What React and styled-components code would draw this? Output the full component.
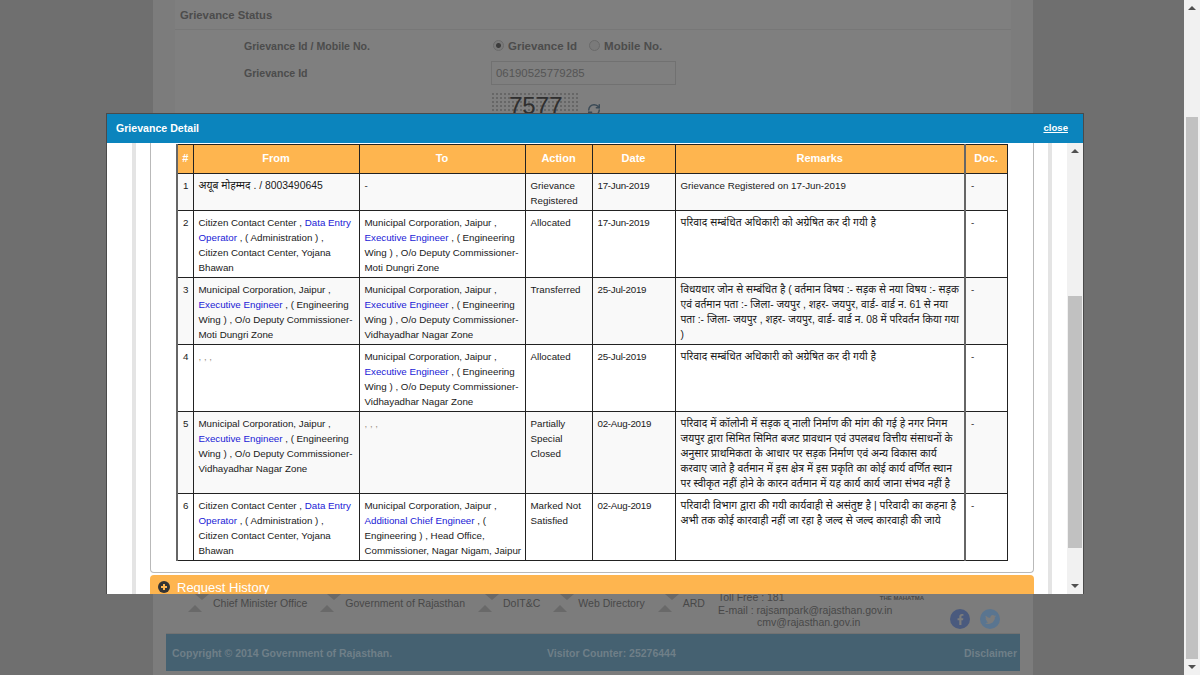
import React from "react";
import styled, { createGlobalStyle } from "styled-components";
import { RefreshCw } from "lucide-react";
import { FaFacebookF, FaTwitter } from "react-icons/fa";

const muni = "Municipal Corporation, Jaipur ,";

const Link = styled.a`
  color: #1a1ad6;
`;

const Muted = styled.span`
  color: #9a8f80;
`;

const Hindi = styled.span`
  font-size: ${(p) => (p.$small ? "10.3px" : "10.4px")};
`;

const Who = ({ org, role, rest }) => (
  <>
    {org} <Link>{role}</Link> {rest}
  </>
);

const citizenRest = (
  <>
    , ( Administration ) ,
    <br />
    Citizen Contact Center, Yojana Bhawan
  </>
);

const rows = [
  {
    id: 1,
    from: <Hindi>अयूब मोहम्मद . / 8003490645</Hindi>,
    to: "-",
    action: "Grievance Registered",
    date: "17-Jun-2019",
    remarks: "Grievance Registered on 17-Jun-2019",
  },
  {
    id: 2,
    from: <Who org="Citizen Contact Center ," role="Data Entry Operator" rest={citizenRest} />,
    to: <Who org={muni} role="Executive Engineer" rest=", ( Engineering Wing ) , O/o Deputy Commissioner-Moti Dungri Zone" />,
    action: "Allocated",
    date: "17-Jun-2019",
    remarks: <Hindi>परिवाद सम्बंधित अधिकारी को अग्रेषित कर दी गयी है</Hindi>,
  },
  {
    id: 3,
    from: <Who org={muni} role="Executive Engineer" rest=", ( Engineering Wing ) , O/o Deputy Commissioner-Moti Dungri Zone" />,
    to: <Who org={muni} role="Executive Engineer" rest=", ( Engineering Wing ) , O/o Deputy Commissioner-Vidhayadhar Nagar Zone" />,
    action: "Transferred",
    date: "25-Jul-2019",
    remarks: (
      <Hindi $small>
        विधयधार जोन से सम्बंधित है ( वर्तमान विषय :- सड़क से नया विषय :- सड़क एवं वर्तमान पता :- जिला- जयपुर , शहर- जयपुर, वार्ड- वार्ड न. 61 से नया पता :- जिला- जयपुर , शहर- जयपुर, वार्ड- वार्ड न. 08 में परिवर्तन किया गया
        <br />)
      </Hindi>
    ),
  },
  {
    id: 4,
    from: <Muted>, , ,</Muted>,
    to: <Who org={muni} role="Executive Engineer" rest=", ( Engineering Wing ) , O/o Deputy Commissioner-Vidhayadhar Nagar Zone" />,
    action: "Allocated",
    date: "25-Jul-2019",
    remarks: <Hindi>परिवाद सम्बंधित अधिकारी को अग्रेषित कर दी गयी है</Hindi>,
  },
  {
    id: 5,
    from: <Who org={muni} role="Executive Engineer" rest=", ( Engineering Wing ) , O/o Deputy Commissioner-Vidhayadhar Nagar Zone" />,
    to: <Muted>, , ,</Muted>,
    action: "Partially Special Closed",
    date: "02-Aug-2019",
    remarks: (
      <Hindi>
        परिवाद में कॉलोनी में सड़क व् नाली निर्माण की मांग की गई हे नगर निगम जयपुर द्वारा सिमित सिमित बजट प्रावधान एवं उपलबध वित्तीय संसाधनों के अनुसार प्राथमिकता के आधार पर सड़क निर्माण एवं अन्य विकास कार्य करवाए जाते है वर्तमान में इस क्षेत्र में इस प्रकृति का कोई कार्य वर्णित स्थान पर स्वीकृत नहीं होने के कारन वर्तमान में यह कार्य कार्य जाना संभव नहीं है
      </Hindi>
    ),
  },
  {
    id: 6,
    from: <Who org="Citizen Contact Center ," role="Data Entry Operator" rest={citizenRest} />,
    to: <Who org={muni} role="Additional Chief Engineer" rest=", ( Engineering ) , Head Office, Commissioner, Nagar Nigam, Jaipur" />,
    action: "Marked Not Satisfied",
    date: "02-Aug-2019",
    remarks: <Hindi>परिवादी विभाग द्वारा की गयी कार्यवाही से असंतुष्ट है | परिवादी का कहना है अभी तक कोई कारवाही नहीं जा रहा है जल्द से जल्द कारवाही की जाये</Hindi>,
  },
];

const footerLinks = ["Chief Minister Office", "Government of Rajasthan", "DoIT&C", "Web Directory", "ARD"];

const App = () => {
  return (
    <Page>
      <GlobalStyle />
      <Backdrop>
        <Column>
          <StatusPanel>
            <StatusTitle>Grievance Status</StatusTitle>
            <FormRow>
              <FormLabel>Grievance Id / Mobile No.</FormLabel>
              <Radio $on />
              <RadioText>Grievance Id</RadioText>
              <Radio />
              <RadioText>Mobile No.</RadioText>
            </FormRow>
            <FormRow>
              <FormLabel>Grievance Id</FormLabel>
              <FakeInput>06190525779285</FakeInput>
            </FormRow>
            <CaptchaRow>
              <Captcha>7577</Captcha>
              <RefreshCw size={14} color="#3a4a56" strokeWidth={2.5} />
            </CaptchaRow>
          </StatusPanel>
          <LinksBand>
            <LinkList>
              {footerLinks.map((l) => (
                <FooterLink key={l}>
                  <Chevron viewBox="0 0 22 20">
                    <path d="M8 0 L22 0 L15 6 Z M1 18 L15 18 L8 11 Z" fill="#696969" />
                  </Chevron>
                  {l}
                </FooterLink>
              ))}
            </LinkList>
            <Contact>
              <div>Toll Free : 181</div>
              <div>E-mail : rajsampark@rajasthan.gov.in</div>
              <ContactIndent>cmv@rajasthan.gov.in</ContactIndent>
            </Contact>
            <BrandSide>
              <Mahatma>THE MAHATMA</Mahatma>
              <Socials>
                <Social $bg="#4a5a7e"><FaFacebookF size={11} /></Social>
                <Social $bg="#5a7590"><FaTwitter size={11} /></Social>
              </Socials>
            </BrandSide>
          </LinksBand>
          <FooterBar>
            <Copyright>Copyright © 2014 Government of Rajasthan.</Copyright>
            <span>Visitor Counter: 25276444</span>
            <Disclaimer>Disclaimer</Disclaimer>
          </FooterBar>
        </Column>
      </Backdrop>
      <PageScroll>
        <ScrollArrow $up />
        <PageThumb />
        <ScrollArrow />
      </PageScroll>

      <Modal>
        <ModalHeader>
          <ModalTitle>Grievance Detail</ModalTitle>
          <CloseLink>close</CloseLink>
        </ModalHeader>
        <ModalBody>
          <ModalContent>
            <OuterBox>
              <AccordionPanel>
                <Table>
                  <colgroup>
                    <col width="16" />
                    <col width="166" />
                    <col width="166" />
                    <col width="67" />
                    <col width="83" />
                    <col width="290" />
                    <col width="42" />
                  </colgroup>
                  <thead>
                    <tr>
                      <Th>#</Th>
                      <Th>From</Th>
                      <Th>To</Th>
                      <Th>Action</Th>
                      <Th>Date</Th>
                      <Th>Remarks</Th>
                      <Th>Doc.</Th>
                    </tr>
                  </thead>
                  <tbody>
                    {rows.map((r) => (
                      <Row key={r.id}>
                        <Cell>{r.id}</Cell>
                        <Cell>{r.from}</Cell>
                        <Cell>{r.to}</Cell>
                        <Cell>{r.action}</Cell>
                        <DateCell>{r.date}</DateCell>
                        <Cell>{r.remarks}</Cell>
                        <Cell>-</Cell>
                      </Row>
                    ))}
                  </tbody>
                </Table>
              </AccordionPanel>
              <HistoryBar>
                <PlusIcon viewBox="0 0 12 12">
                  <circle cx="6" cy="6" r="6" fill="#333" />
                  <path d="M6 3v6M3 6h6" stroke="#feb54f" strokeWidth="2" />
                </PlusIcon>
                Request History
              </HistoryBar>
            </OuterBox>
          </ModalContent>
          <ModalScroll>
            <ScrollArrow $up />
            <ModalThumb />
            <ScrollArrow />
          </ModalScroll>
        </ModalBody>
      </Modal>
    </Page>
  );
};

const GlobalStyle = createGlobalStyle`
  html, body {
    margin: 0;
    padding: 0;
    overflow: hidden;
  }
  body {
    font-family: "Liberation Sans", Arial, "Noto Sans", sans-serif;
  }
`;

const Page = styled.div`
  display: flex;
  width: 1200px;
  height: 675px;
  overflow: hidden;
`;

const Backdrop = styled.div`
  flex: 1;
  background: #6f6f6f;
  padding-left: 153px;
`;

const Column = styled.div`
  width: 880px;
  height: 675px;
  box-sizing: border-box;
  background: #7c7c7c;
  padding: 0 13px 4px;
  display: flex;
  flex-direction: column;
`;

const StatusPanel = styled.div`
  flex: 1;
  margin: 0 9px;
  background: #7f7f7f;
  color: #4c4c4c;
  font-weight: bold;
`;

const StatusTitle = styled.div`
  height: 30px;
  padding: 9px 5px 0;
  box-sizing: border-box;
  border-bottom: 1px solid #777;
  margin-bottom: 2px;
  font-size: 11.3px;
`;

const FormRow = styled.div`
  display: flex;
  align-items: center;
  height: 27px;
  padding-left: 69px;
  font-size: 10.6px;
`;

const FormLabel = styled.div`
  width: 247px;
`;

const Radio = styled.span`
  width: 9px;
  height: 9px;
  margin: 0 4px 0 2px;
  border-radius: 50%;
  border: 1px solid #6a6a6a;
  background: ${(p) => (p.$on ? "radial-gradient(circle, #3c3c3c 0 2px, #7a7a7a 3px)" : "#7a7a7a")};
`;

const RadioText = styled.span`
  margin-right: 10px;
  font-size: 11.5px;
`;

const FakeInput = styled.div`
  width: 185px;
  height: 24px;
  box-sizing: border-box;
  padding: 5px 4px;
  border: 1px solid #717171;
  color: #555;
  font-weight: normal;
  font-size: 11.4px;
`;

const CaptchaRow = styled.div`
  display: flex;
  align-items: center;
  gap: 7px;
  padding: 6px 0 0 316px;
`;

const Captcha = styled.div`
  width: 89px;
  height: 36px;
  padding-left: 18px;
  box-sizing: border-box;
  font-size: 24px;
  color: #2f2f2f;
  font-weight: normal;
  background: radial-gradient(#666 1px, transparent 1px) 0 0 / 4px 4px;
`;

const LinksBand = styled.div`
  display: flex;
  height: 44px;
  box-sizing: border-box;
  padding-top: 4px;
  border-bottom: 1px solid #727272;
  color: #484848;
  font-size: 10.5px;
`;

const LinkList = styled.div`
  display: flex;
  align-items: flex-start;
  width: 552px;
  padding-left: 21px;
  box-sizing: border-box;
  white-space: nowrap;
`;

const FooterLink = styled.div`
  display: flex;
  align-items: flex-start;
  gap: 4px;
  margin-right: 12px;
  line-height: 14px;
  padding-top: 2px;
`;

const Chevron = styled.svg`
  width: 22px;
  height: 20px;
  margin-top: -2px;
`;

const Contact = styled.div`
  width: 158px;
  line-height: 12.5px;
  margin-top: -3px;
  white-space: nowrap;
`;

const ContactIndent = styled.div`
  padding-left: 39px;
`;

const BrandSide = styled.div`
  flex: 1;
  display: flex;
  flex-direction: column;
  align-items: flex-end;
  padding-right: 20px;
`;

const Mahatma = styled.div`
  font-size: 6px;
  font-weight: bold;
  margin-right: 76px;
  line-height: 8px;
`;

const Socials = styled.div`
  display: flex;
  gap: 10px;
  margin-top: 7px;
`;

const Social = styled.span`
  width: 20px;
  height: 20px;
  border-radius: 50%;
  background: ${(p) => p.$bg};
  color: #7c7c7c;
  display: flex;
  align-items: center;
  justify-content: center;
`;

const FooterBar = styled.div`
  height: 37px;
  background: #456171;
  color: #6f7f88;
  font-size: 10.5px;
  font-weight: bold;
  display: flex;
  align-items: center;
  padding: 0 3px 0 6px;
`;

const Copyright = styled.span`
  width: 375px;
`;

const Disclaimer = styled.span`
  margin-left: auto;
`;

const PageScroll = styled.div`
  width: 16px;
  background: #f1f1f1;
  display: flex;
  flex-direction: column;
`;

const PageThumb = styled.div`
  flex: 1;
  margin: 101px 2px 0;
  background: #c1c1c1;
`;

const ScrollArrow = styled.div`
  height: 16px;
  flex: none;
  &::after {
    content: "";
    display: block;
    margin: 6px auto 0;
    width: 0;
    height: 0;
    border-left: 4px solid transparent;
    border-right: 4px solid transparent;
    ${(p) => (p.$up ? "border-bottom: 4px solid #505050;" : "border-top: 4px solid #505050;")}
  }
`;

const Modal = styled.div`
  position: fixed;
  left: 106px;
  top: 113px;
  width: 978px;
  height: 481px;
  box-sizing: border-box;
  border: 1px solid #4a4a4a;
  border-bottom: 0;
  background: #fff;
  display: flex;
  flex-direction: column;
`;

const ModalHeader = styled.div`
  height: 29px;
  flex: none;
  background: #0b84bd;
  color: #fff;
  font-size: 10.6px;
  font-weight: bold;
  display: flex;
  align-items: center;
  justify-content: space-between;
  padding: 0 15px 2px 9px;
  box-sizing: border-box;
`;

const ModalTitle = styled.span``;

const CloseLink = styled.a`
  text-decoration: underline;
  font-size: 9.6px;
`;

const ModalBody = styled.div`
  flex: 1;
  display: flex;
  min-height: 0;
`;

const ModalContent = styled.div`
  flex: 1;
  overflow: hidden;
  padding-left: 25px;
`;

const OuterBox = styled.div`
  width: 920px;
  box-sizing: border-box;
  border-left: 4px solid #e4e4e4;
  border-right: 4px solid #e4e4e4;
  padding: 0 14px;
`;

const AccordionPanel = styled.div`
  border: 1px solid #b9b9b9;
  border-top: 0;
  border-radius: 0 0 4px 4px;
  padding: 1px 27px 11px 25px;
`;

const Table = styled.table`
  width: 830px;
  table-layout: fixed;
  border-collapse: collapse;
  font-size: 9.75px;
  line-height: 15px;
  color: #1a1a1a;
`;

const Th = styled.th`
  height: 26px;
  padding: 0 0 2px;
  background: #feb54f;
  color: #fff;
  font-size: 11px;
  border: 1px solid #222;
  &:first-child {
    border-left: 2px solid #666;
  }
  &:nth-child(6) {
    border-right: 2px solid #666;
  }
`;

const Row = styled.tr`
  background: #fff;
  &:nth-child(odd) {
    background: #f9f9f9;
  }
`;

const Cell = styled.td`
  vertical-align: top;
  padding: 4px 2px 2px 5px;
  border: 1px solid #222;
  &:first-child {
    border-left: 2px solid #666;
  }
  &:nth-child(6) {
    border-right: 2px solid #666;
  }
`;

const DateCell = styled(Cell)`
  letter-spacing: -0.25px;
`;

const HistoryBar = styled.div`
  margin-top: 2px;
  height: 30px;
  background: #feb54f;
  border-radius: 4px 4px 0 0;
  color: #fff;
  font-size: 13px;
  display: flex;
  align-items: flex-start;
  gap: 7px;
  padding: 5px 8px;
  box-sizing: border-box;
`;

const PlusIcon = styled.svg`
  width: 12px;
  height: 12px;
  margin-top: 1px;
`;

const ModalScroll = styled.div`
  width: 16px;
  flex: none;
  background: #f1f1f1;
  display: flex;
  flex-direction: column;
`;

const ModalThumb = styled.div`
  height: 252px;
  margin: 137px 1px auto;
  background: #c1c1c1;
`;

export default App;
